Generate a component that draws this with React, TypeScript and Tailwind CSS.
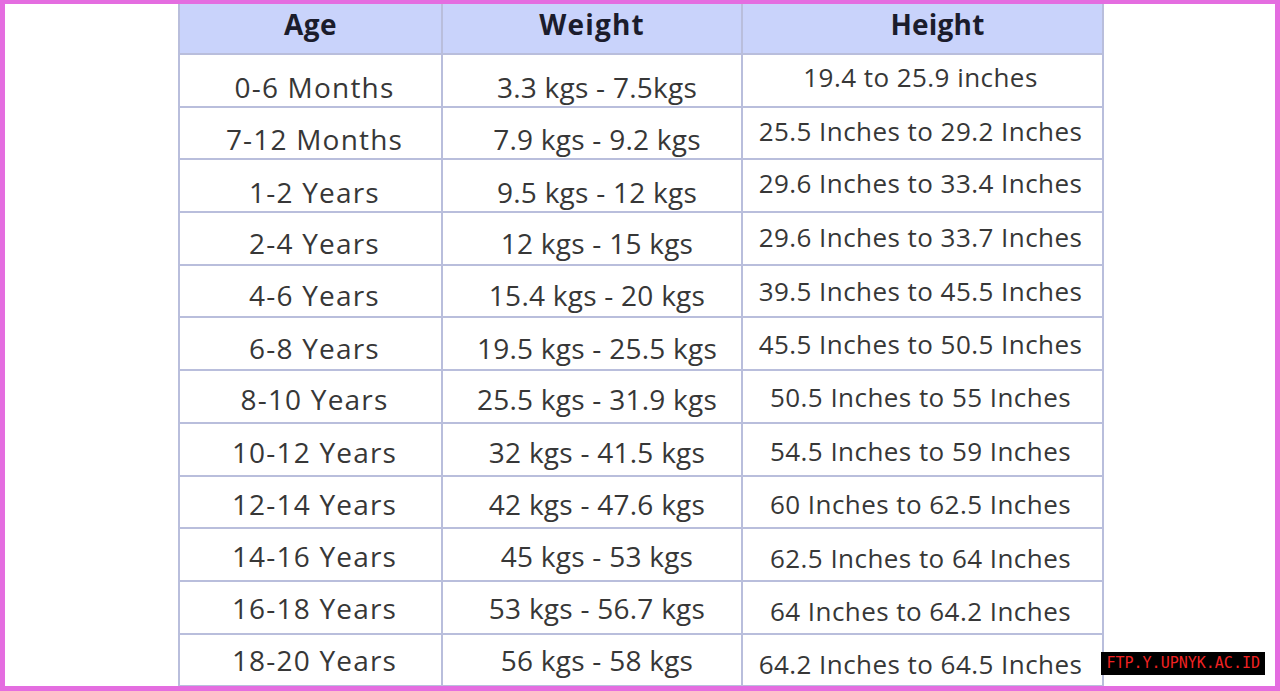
import React from 'react';

type Row = { age: string; weight: string; height: string };

const rows: Row[] = [
  { age: '0-6 Months', weight: '3.3 kgs - 7.5kgs', height: '19.4 to 25.9 inches' },
  { age: '7-12 Months', weight: '7.9 kgs - 9.2 kgs', height: '25.5 Inches to 29.2 Inches' },
  { age: '1-2 Years', weight: '9.5 kgs - 12 kgs', height: '29.6 Inches to 33.4 Inches' },
  { age: '2-4 Years', weight: '12 kgs - 15 kgs', height: '29.6 Inches to 33.7 Inches' },
  { age: '4-6 Years', weight: '15.4 kgs - 20 kgs', height: '39.5 Inches to 45.5 Inches' },
  { age: '6-8 Years', weight: '19.5 kgs - 25.5 kgs', height: '45.5 Inches to 50.5 Inches' },
  { age: '8-10 Years', weight: '25.5 kgs - 31.9 kgs', height: '50.5 Inches to 55 Inches' },
  { age: '10-12 Years', weight: '32 kgs - 41.5 kgs', height: '54.5 Inches to 59 Inches' },
  { age: '12-14 Years', weight: '42 kgs - 47.6 kgs', height: '60 Inches to 62.5 Inches' },
  { age: '14-16 Years', weight: '45 kgs - 53 kgs', height: '62.5 Inches to 64 Inches' },
  { age: '16-18 Years', weight: '53 kgs - 56.7 kgs', height: '64 Inches to 64.2 Inches' },
  { age: '18-20 Years', weight: '56 kgs - 58 kgs', height: '64.2 Inches to 64.5 Inches' },
];

// the source image drifts a bit row by row
const leftShift = [
  'translate-y-[7px]', 'translate-y-[6px]', 'translate-y-[6px]', 'translate-y-[5px]',
  'translate-y-[4px]', 'translate-y-[4px]', 'translate-y-[3px]', 'translate-y-[3px]',
  'translate-y-[2px]', 'translate-y-[1px]', 'translate-y-[1px]', 'translate-y-0',
];
const heightShift = [
  '-translate-y-[3px]', '-translate-y-[2px]', '-translate-y-[2px]', '-translate-y-[1px]',
  'translate-y-0', 'translate-y-[1px]', 'translate-y-[1px]', 'translate-y-[2px]',
  'translate-y-[3px]', 'translate-y-[4px]', 'translate-y-[4px]', 'translate-y-[5px]',
];

const cell = 'flex items-center justify-center border-r-2 border-b-2 border-[#b9bedc]';
const head = '-translate-y-[5px] text-[28px] font-bold text-[#1b1c2c]';
const body = 'font-medium text-[#373737]';

export default function App() {
  return (
    <div className="relative h-[691px] w-[1280px] overflow-hidden border-x-[5px] border-t-[4px] border-b-[5px] border-[#e46de0] bg-white font-['Open_Sans',sans-serif]">
      <div className="pl-[173px]">
        <div className="grid w-[924px] grid-cols-[263px_300px_361px] border-l-2 border-[#b9bedc]">
          <div className={`${cell} h-[51px] bg-[#c9d3fb]`}>
            <span className={`${head} tracking-[0.5px]`}>Age</span>
          </div>
          <div className={`${cell} h-[51px] bg-[#c9d3fb]`}>
            <span className={`${head} tracking-[1.2px]`}>Weight</span>
          </div>
          <div className={`${cell} h-[51px] bg-[#c9d3fb]`}>
            <span className={`${head} translate-x-[15px] tracking-[0.2px]`}>Height</span>
          </div>
          {rows.map((r, i) => (
            <React.Fragment key={`row--${i}`}>
              <div className={`${cell} h-[52.7px]`}>
                <span className={`${leftShift[i]} ${body} translate-x-[4px] text-[28px] tracking-[1.2px]`}>{r.age}</span>
              </div>
              <div className={`${cell} h-[52.7px]`}>
                <span className={`${leftShift[i]} ${body} translate-x-[5px] text-[28px] tracking-[0.25px]`}>{r.weight}</span>
              </div>
              <div className={`${cell} h-[52.7px]`}>
                <span className={`${heightShift[i]} ${body} -translate-x-[2px] text-[26px] tracking-[0.45px]`}>{r.height}</span>
              </div>
            </React.Fragment>
          ))}
        </div>
      </div>
      <div className="absolute right-[10px] bottom-[11px] bg-black px-[5px] py-[1px] font-['DejaVu_Sans_Mono',monospace] text-[15px] leading-[21px] text-[#f02222]">
        FTP.Y.UPNYK.AC.ID
      </div>
    </div>
  );
}
